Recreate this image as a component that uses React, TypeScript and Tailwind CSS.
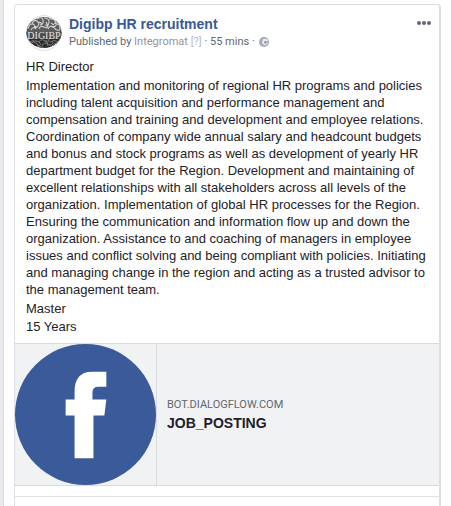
const description =
  "Implementation and monitoring of regional HR programs and policies including talent acquisition and performance management and compensation and training and development and employee relations. Coordination of company wide annual salary and headcount budgets and bonus and stock programs as well as development of yearly HR department budget for the Region. Development and maintaining of excellent relationships with all stakeholders across all levels of the organization. Implementation of global HR processes for the Region. Ensuring the communication and information flow up and down the organization. Assistance to and coaching of managers in employee issues and conflict solving and being compliant with policies. Initiating and managing change in the region and acting as a trusted advisor to the management team.";

function Avatar() {
  return (
    <svg viewBox="0 0 36 36" className="size-9 shrink-0" role="img" aria-label="Digibp logo">
      <defs>
        <clipPath id="brain">
          <ellipse cx="18" cy="17.5" rx="17.5" ry="15.5" />
        </clipPath>
      </defs>
      <circle cx="18" cy="18" r="17.5" fill="#fafafa" stroke="#e2e2e2" />
      <g clipPath="url(#brain)">
        <rect width="36" height="17" fill="#5c5c5c" />
        <rect y="17" width="36" height="19" fill="#2c2c2c" />
        <g fill="none" stroke="#d2d2d2" strokeWidth="1.1">
          <path d="M2 14q1-5 4-5t3 4M6 9q2-5 5-3t1 5-4 1M11 4q5-3 6 1t-3 5M18 3q5 0 5 4t-4 3M23 4q6-1 7 4t-5 3M28 8q6 1 6 5t-5 1M5 15q2-4 5-1M13 14q1-4 5-2t4-2M22 14q2-4 5-2t3 3M12 8q3-2 4 2M20 7q2 2 1 6M8 11l3 1M25 8l3 2" />
        </g>
        <g fill="none" stroke="#7d7d7d" strokeWidth="1">
          <path d="M1 26q4 2 7-1M5 29q4-5 8-2t-2 4M13 27q2-4 6-1t4-2M16 31q2-5 6-2t5-2M24 27q4-3 8 0M10 33q5-3 8 0M26 31q2-3 6-3M8 27q4 1 5 5M20 25l2 6" />
        </g>
        <path d="M0 17h36v7H0z" fill="#4c4c4c" />
      </g>
      <text x="18" y="24" textAnchor="middle" fontSize="10" fill="#e6e6e6" fontFamily="Liberation Serif, serif">
        DIGIBP
      </text>
    </svg>
  );
}

function Globe() {
  return (
    <svg viewBox="0 0 10 10" className="size-[10px]" role="img" aria-label="Public">
      <circle cx="5" cy="5" r="5" fill="#a7abb5" />
      <path d="M4 2h4l1 2H5v1h4L7 8H5L3 6z" fill="#e9ebee" />
      <path d="M5 5h3L6 7z" fill="#7f8593" />
    </svg>
  );
}

function FacebookLogo() {
  return (
    <svg viewBox="0 0 142 142" className="block size-[141px]" role="img" aria-label="Facebook">
      <circle cx="71" cy="71" r="71" fill="#3b5a9a" />
      <path d="M60 115V72H51V56h9V48C60 35 66 28 77 28H92V43H84Q78 43 78 49V56H92L90 72H79V115Z" fill="#fff" />
    </svg>
  );
}

export default function App() {
  return (
    <div className="flex min-h-screen bg-white font-['Liberation_Sans',Arial,sans-serif]">
      <div className="w-1 shrink-0 border-r border-[#dcdee3] bg-[#e9ebee]" />
      <main className="flex min-w-0 grow px-[10px] pt-1">
        <article className="min-w-0 grow rounded-t border border-r-2 border-b-0 border-[#dddfe2]">
          <header className="flex gap-[7px] pt-[10px] pr-2 pl-[11px]">
            <Avatar />
            <div className="min-w-0 grow">
              <h1 className="text-sm leading-[18px] font-bold">
                <a href="#page" className="text-[#365899]">Digibp HR recruitment</a>
              </h1>
              <p className="flex items-center gap-1 font-['Roboto',sans-serif] text-[11px] leading-[18px] text-[#616770]">
                <span>
                  Published by <a href="#integromat" className="text-[#90949c]">Integromat</a>{" "}
                  <a href="#help" className="text-[#b8bbc2]">[?]</a> · 55 mins ·
                </span>
                <Globe />
              </p>
            </div>
            <button type="button" aria-label="More options" className="flex h-4 items-center gap-px self-start">
              <span className="size-1 rounded-full bg-[#606770]" />
              <span className="size-1 rounded-full bg-[#606770]" />
              <span className="size-1 rounded-full bg-[#606770]" />
            </button>
          </header>
          <div className="px-[11px] pt-[7px] pb-2 text-[13px] leading-[17px] text-[#1d2129]">
            <p className="pb-[2px]">HR Director</p>
            <p>{description}</p>
            <p className="pt-[2px]">Master</p>
            <p className="pt-px">15 Years</p>
          </div>
          <a href="#job" className="flex border-y border-[#d8dade] bg-[#f1f2f4]">
            <div className="shrink-0 border-r border-[#d8dade]">
              <FacebookLogo />
            </div>
            <div className="flex flex-col justify-center px-[10px]">
              <span className="font-['Roboto',sans-serif] text-[11px] leading-4 text-[#606770]">BOT.DIALOGFLOW.COM</span>
              <strong className="text-sm leading-5 text-[#1d2129]">JOB_POSTING</strong>
            </div>
          </a>
          <div className="mt-[10px] border-t border-[#e1e2e5]" />
        </article>
      </main>
    </div>
  );
}
